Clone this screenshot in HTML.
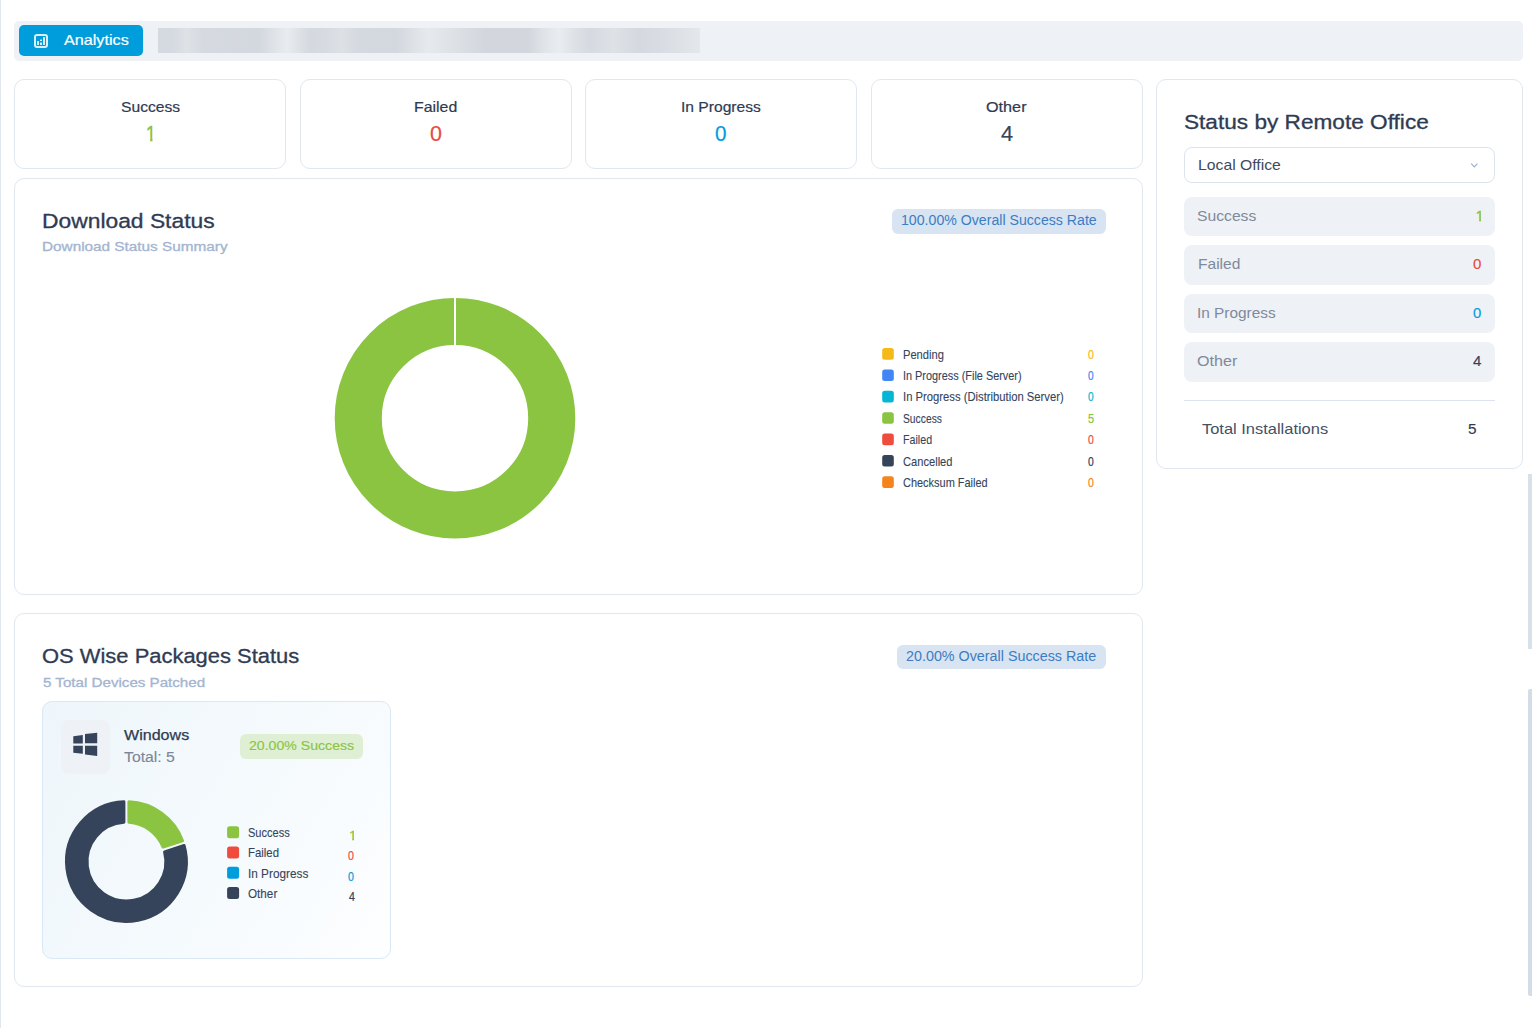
<!DOCTYPE html>
<html lang="en">
<head>
<meta charset="utf-8">
<title>Analytics</title>
<style>
*{box-sizing:border-box;margin:0;padding:0}
html,body{width:1532px;height:1028px;overflow:hidden;background:#fff}
body{font-family:"Liberation Sans",sans-serif;color:#2f3b52;position:relative}
.abs{position:absolute}
.t{position:absolute;font-weight:400;white-space:nowrap;line-height:40px;transform-origin:0 0;font-family:"Liberation Sans",sans-serif}
.edge{left:0;top:0;width:1px;height:1028px;background:#e1e7ee}
.tabbar{left:14px;top:21px;width:1509px;height:40px;background:#eef1f6;border-radius:5px}
.tab{left:19px;top:25px;width:124px;height:31px;background:#009ddc;border-radius:5px}
.blur{left:158px;top:28px;width:542px;height:25px;background:linear-gradient(90deg,#d6dae0 0.0%,#d5d9e0 2.6%,#dee1e6 5.2%,#d6dae0 8.3%,#d3d7de 18.5%,#dfe2e7 21.4%,#e8ebef 23.8%,#dee1e6 26.0%,#d4d8df 28.2%,#d7dbe1 31.0%,#dde0e5 33.9%,#d4d8df 37.3%,#d3d7de 43.9%,#dee1e6 47.2%,#e6e9ed 49.8%,#dee1e6 54.2%,#d3d7dd 60.3%,#d3d7dd 68.3%,#e0e3e8 71.2%,#e9ecf0 74.0%,#dee1e6 76.8%,#d6dae0 79.7%,#dee1e6 84.1%,#d5d9df 88.6%,#d9dce2 93.0%,#e0e3e8 97.8%,#e4e7eb 100.0%)}
.card{border:1px solid #e1e7ef;border-radius:10px;background:#fff}
.stat{top:79px;width:272px;height:90px}
.badge{border-radius:6px}
.badge.bl{background:#d8e4f1}
.row{left:1184px;width:311px;background:#eef1f6;border-radius:8px}
.sw{width:12px;height:12px;border-radius:3px}
</style>
</head>
<body>
<div class="abs edge"></div>
<nav aria-label="Report tabs">
<div class="abs tabbar"></div>
<div class="abs tab">
<svg class="abs" style="left:15px;top:9px" width="14" height="14" viewBox="0 0 14 14" opacity="0.85"><rect x="1" y="1" width="12" height="12" rx="2" fill="none" stroke="#fff" stroke-width="2"/><rect x="3" y="7" width="2" height="4" rx="0.5" fill="#fff"/><rect x="6" y="5.5" width="2" height="1.4" rx="0.5" fill="#fff"/><rect x="6" y="8.4" width="2" height="2.6" rx="0.5" fill="#fff"/><rect x="9" y="3" width="2" height="8" rx="0.5" fill="#fff"/></svg>
</div>
<div class="abs blur"></div>
<div class="t" style="left:64.00px;top:20px;font-size:14.5px;color:#fff;-webkit-text-stroke:0.2px #fff;transform:scaleX(1.1155)">Analytics</div>
</nav>
<main>
<section aria-label="Installation summary">
<div class="abs card stat" style="left:14px"></div>
<div class="abs card stat" style="left:300px"></div>
<div class="abs card stat" style="left:585px"></div>
<div class="abs card stat" style="left:871px"></div>
<div class="t" style="left:120.99px;top:87px;font-size:14.5px;color:#2f3b52;-webkit-text-stroke:0.2px #2f3b52;transform:scaleX(1.0794)">Success</div>
<div class="t" style="left:413.85px;top:87px;font-size:14.5px;color:#2f3b52;-webkit-text-stroke:0.2px #2f3b52;transform:scaleX(1.0941)">Failed</div>
<div class="t" style="left:680.72px;top:87px;font-size:14.5px;color:#2f3b52;-webkit-text-stroke:0.2px #2f3b52;transform:scaleX(1.0766)">In Progress</div>
<div class="t" style="left:985.88px;top:87px;font-size:14.5px;color:#2f3b52;-webkit-text-stroke:0.2px #2f3b52;transform:scaleX(1.1175)">Other</div>
<div class="t" style="left:145.71px;top:114px;font-size:21.3px;color:#8ac440;-webkit-text-stroke:0.7px #8ac440;clip-path:polygon(1.07px 8.75px,7.61px 8.75px,7.61px 29.25px,4.88px 29.25px,4.88px 24.00px,1.07px 24.00px);transform:scaleX(0.8600)">1</div>
<div class="t" style="left:430.18px;top:114px;font-size:21.3px;color:#e74c3c;-webkit-text-stroke:0.2px #e74c3c;transform:scaleX(1.0077)">0</div>
<div class="t" style="left:715.19px;top:114px;font-size:21.3px;color:#009ddc;-webkit-text-stroke:0.2px #009ddc;transform:scaleX(0.9684)">0</div>
<div class="t" style="left:1000.96px;top:114px;font-size:21.3px;color:#35445a;-webkit-text-stroke:0.2px #35445a;transform:scaleX(1.0255)">4</div>
</section>
<section aria-label="Download Status">
<div class="abs card" style="left:14px;top:178px;width:1129px;height:417px"></div>
<div class="abs badge bl" style="left:892px;top:209px;width:214px;height:25px"></div>
<svg class="abs" style="left:330px;top:293px" width="250" height="250" viewBox="0 0 250 250"><circle cx="125" cy="125.2" r="96.75" fill="none" stroke="#8ac440" stroke-width="47.1"/><rect x="124" y="3" width="2" height="50" fill="#fff"/></svg>
<svg class="abs" style="left:0;top:0" width="1200" height="600"><rect x="882.2" y="348.10" width="11.6" height="11.6" rx="2.5" fill="#f5b91a"/><rect x="882.2" y="369.47" width="11.6" height="11.6" rx="2.5" fill="#4285f4"/><rect x="882.2" y="390.84" width="11.6" height="11.6" rx="2.5" fill="#06b6d4"/><rect x="882.2" y="412.21" width="11.6" height="11.6" rx="2.5" fill="#8ac440"/><rect x="882.2" y="433.58" width="11.6" height="11.6" rx="2.5" fill="#ef4c3e"/><rect x="882.2" y="454.95" width="11.6" height="11.6" rx="2.5" fill="#35445a"/><rect x="882.2" y="476.32" width="11.6" height="11.6" rx="2.5" fill="#f5841c"/></svg>
<h2 class="t" style="left:42.20px;top:202px;font-size:19.3px;color:#2f3b52;-webkit-text-stroke:0.3px #2f3b52;transform:scaleX(1.1842)">Download Status</h2>
<p class="t" style="left:42.11px;top:227px;font-size:13.6px;color:#a3b5d0;-webkit-text-stroke:0.33px #a3b5d0;transform:scaleX(1.1265)">Download Status Summary</p>
<div class="t" style="left:900.97px;top:201px;font-size:13.8px;color:#3b7dc4;transform:scaleX(1.0248)">100.00% Overall Success Rate</div>
<div class="t" style="left:903.39px;top:335px;font-size:12.2px;color:#35445a;-webkit-text-stroke:0.1px #35445a;transform:scaleX(0.9130)">Pending</div>
<div class="t" style="left:1088.36px;top:335px;font-size:12.2px;color:#f5b91a;-webkit-text-stroke:0.22px #f5b91a;transform:scaleX(0.8692)">0</div>
<div class="t" style="left:903.15px;top:356px;font-size:12.2px;color:#35445a;-webkit-text-stroke:0.1px #35445a;transform:scaleX(0.8936)">In Progress (File Server)</div>
<div class="t" style="left:1088.43px;top:356px;font-size:12.2px;color:#4285f4;-webkit-text-stroke:0.22px #4285f4;transform:scaleX(0.8271)">0</div>
<div class="t" style="left:903.39px;top:377px;font-size:12.2px;color:#35445a;-webkit-text-stroke:0.1px #35445a;transform:scaleX(0.9232)">In Progress (Distribution Server)</div>
<div class="t" style="left:1088.30px;top:377px;font-size:12.2px;color:#06b6d4;-webkit-text-stroke:0.22px #06b6d4;transform:scaleX(0.8320)">0</div>
<div class="t" style="left:902.65px;top:399px;font-size:12.2px;color:#35445a;-webkit-text-stroke:0.1px #35445a;transform:scaleX(0.8451)">Success</div>
<div class="t" style="left:1088.15px;top:399px;font-size:12.2px;color:#8ac440;-webkit-text-stroke:0.22px #8ac440;transform:scaleX(0.9029)">5</div>
<div class="t" style="left:903.24px;top:420px;font-size:12.2px;color:#35445a;-webkit-text-stroke:0.1px #35445a;transform:scaleX(0.8757)">Failed</div>
<div class="t" style="left:1088.00px;top:420px;font-size:12.2px;color:#ef4c3e;-webkit-text-stroke:0.22px #ef4c3e;transform:scaleX(0.8578)">0</div>
<div class="t" style="left:902.76px;top:442px;font-size:12.2px;color:#35445a;-webkit-text-stroke:0.1px #35445a;transform:scaleX(0.9134)">Cancelled</div>
<div class="t" style="left:1087.72px;top:442px;font-size:12.2px;color:#35445a;-webkit-text-stroke:0.22px #35445a;transform:scaleX(0.8479)">0</div>
<div class="t" style="left:902.81px;top:463px;font-size:12.2px;color:#35445a;-webkit-text-stroke:0.1px #35445a;transform:scaleX(0.8994)">Checksum Failed</div>
<div class="t" style="left:1087.86px;top:463px;font-size:12.2px;color:#f5841c;-webkit-text-stroke:0.22px #f5841c;transform:scaleX(0.8662)">0</div>
</section>
<section aria-label="OS Wise Packages Status">
<div class="abs card" style="left:14px;top:613px;width:1129px;height:374px"></div>
<div class="abs badge bl" style="left:897px;top:645px;width:209px;height:24px"></div>
<div class="abs" style="left:42px;top:701px;width:349px;height:258px;border:1px solid #dae8f5;border-radius:10px;background:linear-gradient(120deg,#eef6fb 0%,#f5fafd 55%,#fdfeff 100%)"></div>
<div class="abs" style="left:61px;top:720px;width:49px;height:54px;border-radius:8px;background:#eef1f6"></div>
<svg class="abs" style="left:0;top:0" width="200" height="800" viewBox="0 0 200 800"><path fill="#35445a" d="M73.3 736.2 82.8 734.9V743.4H73.3ZM85 734 97.2 732.7V743.3H85ZM73.3 745.7H82.8V753.7L73.3 752.7ZM85 745.7H97.2V756.1L85 754.5Z"/></svg>
<div class="abs badge" style="left:240px;top:734px;width:123px;height:25px;background:#dfefd4"></div>
<svg class="abs" style="left:0;top:0" width="400" height="1028"><path d="M128.90 801.75A59.90 59.90 0 0 1 182.55 840.73L163.02 847.07A39.40 39.40 0 0 0 128.90 822.28Z" fill="#8ac440" stroke="#8ac440" stroke-width="3.0" stroke-linejoin="round"/><path d="M184.09 845.48A59.90 59.90 0 1 1 123.90 801.75L123.90 822.28A39.40 39.40 0 1 0 164.57 851.83Z" fill="#35445a" stroke="#35445a" stroke-width="3.0" stroke-linejoin="round"/></svg>
<svg class="abs" style="left:0;top:0" width="400" height="1028"><rect x="227.1" y="826.20" width="12" height="12" rx="2.5" fill="#8ac440"/><rect x="227.1" y="846.45" width="12" height="12" rx="2.5" fill="#ef4c3e"/><rect x="227.1" y="866.70" width="12" height="12" rx="2.5" fill="#009ddc"/><rect x="227.1" y="886.95" width="12" height="12" rx="2.5" fill="#35445a"/></svg>
<h2 class="t" style="left:42.15px;top:637px;font-size:19.3px;color:#2f3b52;-webkit-text-stroke:0.3px #2f3b52;transform:scaleX(1.1378)">OS Wise Packages Status</h2>
<p class="t" style="left:42.87px;top:663px;font-size:13.6px;color:#a3b5d0;-webkit-text-stroke:0.33px #a3b5d0;transform:scaleX(1.1136)">5 Total Devices Patched</p>
<div class="t" style="left:906.48px;top:637px;font-size:13.8px;color:#3b7dc4;transform:scaleX(1.0381)">20.00% Overall Success Rate</div>
<div class="t" style="left:124.45px;top:715px;font-size:14.8px;color:#2f3b52;-webkit-text-stroke:0.25px #2f3b52;transform:scaleX(1.0857)">Windows</div>
<div class="t" style="left:123.52px;top:737px;font-size:15.2px;color:#7a8699;-webkit-text-stroke:0.1px #7a8699;transform:scaleX(1.0389)">Total: 5</div>
<div class="t" style="left:248.59px;top:726px;font-size:13.6px;color:#8ac440;-webkit-text-stroke:0.12px #8ac440;transform:scaleX(1.0379)">20.00% Success</div>
<div class="t" style="left:247.88px;top:813px;font-size:12.2px;color:#35445a;-webkit-text-stroke:0.1px #35445a;transform:scaleX(0.9042)">Success</div>
<div class="t" style="left:348.93px;top:816px;font-size:12.2px;color:#8ac440;-webkit-text-stroke:0.3px #8ac440;clip-path:polygon(0.61px 11.76px,4.35px 11.76px,4.35px 26.24px,2.80px 26.24px,2.80px 22.48px,0.61px 22.48px);transform:scaleX(1.1500)">1</div>
<div class="t" style="left:248.08px;top:833px;font-size:12.2px;color:#35445a;-webkit-text-stroke:0.1px #35445a;transform:scaleX(0.9338)">Failed</div>
<div class="t" style="left:348.30px;top:836px;font-size:12.2px;color:#ef4c3e;-webkit-text-stroke:0.22px #ef4c3e;transform:scaleX(0.8742)">0</div>
<div class="t" style="left:248.05px;top:854px;font-size:12.2px;color:#35445a;-webkit-text-stroke:0.1px #35445a;transform:scaleX(0.9672)">In Progress</div>
<div class="t" style="left:347.90px;top:857px;font-size:12.2px;color:#009ddc;-webkit-text-stroke:0.22px #009ddc;transform:scaleX(0.8681)">0</div>
<div class="t" style="left:248.18px;top:874px;font-size:12.2px;color:#35445a;-webkit-text-stroke:0.1px #35445a;transform:scaleX(0.9605)">Other</div>
<div class="t" style="left:348.63px;top:877px;font-size:12.2px;color:#35445a;-webkit-text-stroke:0.22px #35445a;transform:scaleX(0.8707)">4</div>
</section>
</main>
<aside aria-label="Status by Remote Office">
<div class="abs card" style="left:1156px;top:79px;width:367px;height:390px"></div>
<div class="abs" style="left:1184px;top:147px;width:311px;height:36px;border:1px solid #dde3ec;border-radius:8px;background:#fff"></div>
<svg class="abs" style="left:1465px;top:158px" width="20" height="14" viewBox="1465 158 20 14" fill="none" stroke="#9bafcb" stroke-width="1.15"><path d="M1471.2 163.6 1474.3 166.8 1477.4 163.6"/></svg>
<div class="abs row" style="top:197px;height:39px"></div>
<div class="abs row" style="top:245px;height:40px"></div>
<div class="abs row" style="top:294px;height:39px"></div>
<div class="abs row" style="top:342px;height:40px"></div>
<div class="abs" style="left:1184px;top:400px;width:311px;height:1px;background:#dde3ec"></div>
<h2 class="t" style="left:1183.90px;top:103px;font-size:19.3px;color:#2f3b52;-webkit-text-stroke:0.3px #2f3b52;transform:scaleX(1.1733)">Status by Remote Office</h2>
<div class="t" style="left:1197.95px;top:145px;font-size:14.6px;color:#3e4a60;transform:scaleX(1.0785)">Local Office</div>
<div class="t" style="left:1197.07px;top:196px;font-size:14.8px;color:#7f8a9a;transform:scaleX(1.0604)">Success</div>
<div class="t" style="left:1197.79px;top:244px;font-size:14.8px;color:#7f8a9a;transform:scaleX(1.0506)">Failed</div>
<div class="t" style="left:1197.42px;top:293px;font-size:14.8px;color:#7f8a9a;transform:scaleX(1.0391)">In Progress</div>
<div class="t" style="left:1197.33px;top:341px;font-size:14.8px;color:#7f8a9a;transform:scaleX(1.0884)">Other</div>
<div class="t" style="left:1475.51px;top:196px;font-size:15.5px;color:#8ac440;-webkit-text-stroke:0.4px #8ac440;clip-path:polygon(0.78px 11.76px,5.51px 11.76px,5.51px 27.24px,3.57px 27.24px,3.57px 22.98px,0.78px 22.98px);transform:scaleX(1.0000)">1</div>
<div class="t" style="left:1472.66px;top:244px;font-size:15.5px;color:#e74c3c;-webkit-text-stroke:0.15px #e74c3c;transform:scaleX(0.9707)">0</div>
<div class="t" style="left:1472.97px;top:293px;font-size:15.5px;color:#009ddc;-webkit-text-stroke:0.15px #009ddc;transform:scaleX(0.9577)">0</div>
<div class="t" style="left:1473.01px;top:341px;font-size:15.5px;color:#35445a;-webkit-text-stroke:0.15px #35445a;transform:scaleX(0.9698)">4</div>
<div class="t" style="left:1202.12px;top:409px;font-size:15.0px;color:#445066;transform:scaleX(1.0962)">Total Installations</div>
<div class="t" style="left:1468.30px;top:409px;font-size:15.5px;color:#2f3b52;-webkit-text-stroke:0.15px #2f3b52;transform:scaleX(0.9894)">5</div>
</aside>
<div class="abs" style="left:1528px;top:474px;width:4px;height:175px;background:#d8e1ea"></div>
<div class="abs" style="left:1528px;top:689px;width:4px;height:307px;background:#d3dde8;border-radius:2px 0 0 2px"></div>
</body>
</html>
